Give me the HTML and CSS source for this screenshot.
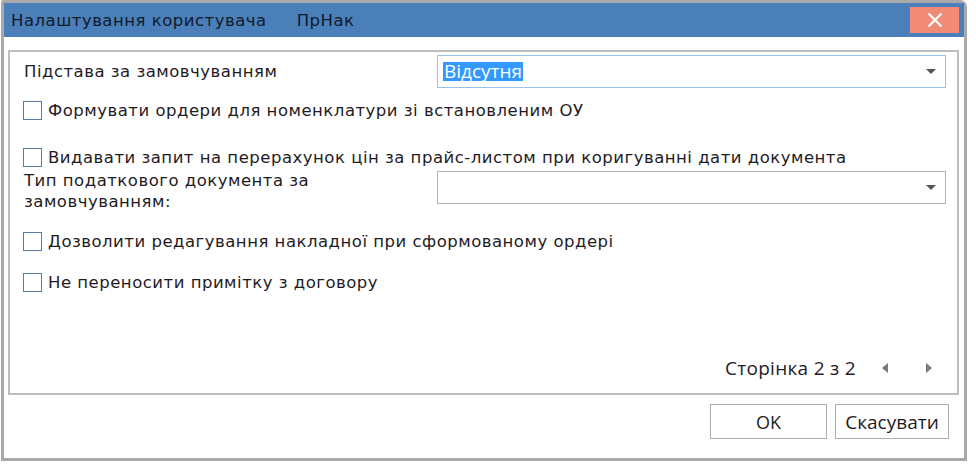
FILE: index.html
```html
<!DOCTYPE html>
<html lang="uk">
<head>
    <meta charset="UTF-8">
    <title>Налаштування користувача</title>
    <link rel="stylesheet" href="styles.css">
</head>
<body>
    <div class="window">
        <div class="titlebar">
            <span class="title">Налаштування користувача</span>
            <span class="title-code">ПрНак</span>
            <button class="close" aria-label="Закрити">
                <svg width="18" height="18" viewBox="0 0 18 18">
                    <path d="M2.5 2.5 L15.5 15.5 M15.5 2.5 L2.5 15.5" stroke="#fff" stroke-width="2.2" fill="none"/>
                </svg>
            </button>
        </div>

        <div class="content">
            <div class="panel">
                <div class="row">
                    <div class="label">Підстава за замовчуванням</div>
                    <div class="combo focused">
                        <span class="selected">Відсутня</span>
                        <span class="arrow"></span>
                    </div>
                </div>

                <label class="check first">
                    <span class="box"></span>
                    Формувати ордери для номенклатури зі встановленим ОУ
                </label>

                <label class="check second">
                    <span class="box"></span>
                    Видавати запит на перерахунок цін за прайс-листом при коригуванні дати документа
                </label>

                <div class="row tax">
                    <div class="label">Тип податкового документа за<br>замовчуванням:</div>
                    <div class="combo">
                        <span></span>
                        <span class="arrow"></span>
                    </div>
                </div>

                <label class="check third">
                    <span class="box"></span>
                    Дозволити редагування накладної при сформованому ордері
                </label>

                <label class="check fourth">
                    <span class="box"></span>
                    Не переносити примітку з договору
                </label>

                <div class="pager">
                    <span class="pages">Сторінка 2 з 2</span>
                    <span class="tri left"></span>
                    <span class="tri right"></span>
                </div>
            </div>

            <div class="buttons">
                <button class="btn ok">OK</button>
                <button class="btn">Скасувати</button>
            </div>
        </div>
    </div>
</body>
</html>
```

FILE: styles.css
```css
body {
    margin: 0;
    background: #fff;
    font-family: 'DejaVu Sans', Verdana, sans-serif;
    font-size: 16.5px;
    letter-spacing: 0.5px;
    color: #1f1b24;
}
.window {
    width: 960px;
    height: 455px;
    margin-left: 1px;
    border: 3px solid #a9a9a9;
    border-radius: 2px 7px 0 0;
    background: #fff;
    display: flex;
    flex-direction: column;
}
.titlebar {
    height: 34px;
    background: #4a7fba;
    display: flex;
    align-items: center;
    padding-left: 7px;
    color: #111a2a;
}
.title-code {
    margin-left: 30px;
}
.close {
    margin-left: auto;
    margin-right: 5px;
    width: 49px;
    height: 26px;
    border: none;
    background: #f28a78;
    display: flex;
    align-items: center;
    justify-content: center;
    padding: 0;
}
.content {
    flex: 1;
    padding: 13px 5px 0 4px;
    display: flex;
    flex-direction: column;
}
.panel {
    height: 338px;
    border: 2px solid #bdbdbd;
    padding: 3px 11px 0 14px;
    display: flex;
    flex-direction: column;
}
.row {
    display: flex;
    align-items: center;
}
.label {
    width: 413px;
    line-height: 21px;
}
.combo {
    flex: 1;
    height: 31px;
    border: 1px solid #b4b4b4;
    display: flex;
    align-items: center;
    padding: 0 9px 0 5px;
}
.combo.focused {
    border-color: #99c2ea;
}
.tax {
    margin-top: 3px;
    align-items: flex-start;
}
.tax .combo {
    margin-top: 1px;
}
.selected {
    background: #3399ff;
    color: #fff;
    font-family: 'Open Sans', sans-serif;
    font-size: 19px;
    letter-spacing: 0;
    line-height: 19px;
    padding: 0 1px;
}
.arrow {
    margin-left: auto;
    border-left: 5px solid transparent;
    border-right: 5px solid transparent;
    border-top: 5px solid #555;
}
.check {
    display: flex;
    align-items: center;
    height: 20px;
}
.box {
    width: 17px;
    height: 17px;
    border: 1px solid #5b7ca6;
    margin-right: 6px;
    margin-left: -1px;
}
.first { margin-top: 12px; }
.second { margin-top: 27px; }
.third { margin-top: 19px; }
.fourth { margin-top: 21px; }
.pager {
    margin-top: auto;
    margin-bottom: 12px;
    display: flex;
    align-items: center;
    justify-content: flex-end;
    font-family: 'Open Sans', sans-serif;
    font-size: 19px;
    letter-spacing: 0.3px;
}
.tri {
    width: 0;
    height: 0;
    border-top: 5px solid transparent;
    border-bottom: 5px solid transparent;
}
.tri.left {
    border-right: 6px solid #7a7a7a;
    margin-left: 26px;
}
.tri.right {
    border-left: 6px solid #7a7a7a;
    margin-left: 38px;
    margin-right: 14px;
}
.buttons {
    display: flex;
    justify-content: flex-end;
    gap: 8px;
    padding: 9px 10px 0 0;
}
.btn {
    height: 35px;
    background: #fff;
    border: 1px solid #adadad;
    font-family: 'Open Sans', sans-serif;
    font-size: 19px;
    color: #1f1b24;
    padding: 0;
}
.btn.ok {
    width: 117px;
    font-size: 18px;
}
.btn:not(.ok) { width: 114px; }
```
